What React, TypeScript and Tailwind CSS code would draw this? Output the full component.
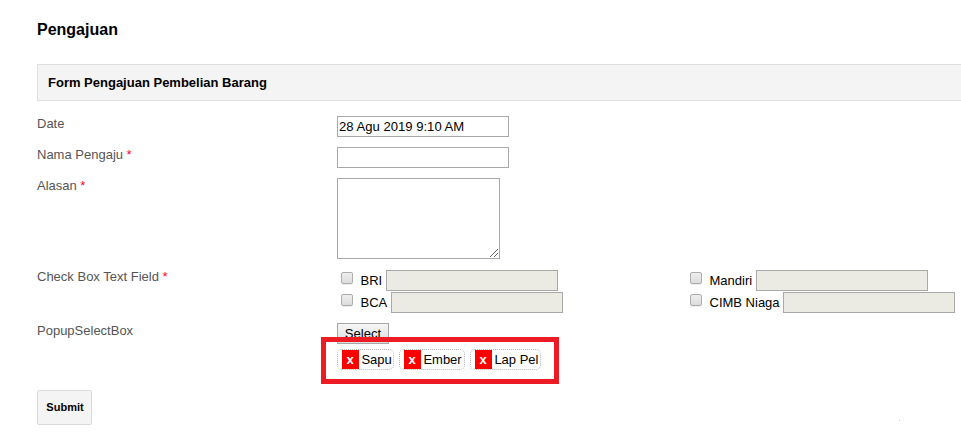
import React from "react";

type BankProps = { name: string; width: string };

function Required() {
  return <span className="text-[#ff0033]"> *</span>;
}

function Label({ text, required }: { text: string; required?: boolean }) {
  return (
    <label className="w-[300px] shrink-0 text-[#555555]">
      {text}
      {required && <Required />}
    </label>
  );
}

function BankOption({ name, width }: BankProps) {
  return (
    <div className="flex h-[22px] items-start">
      <button
        type="button"
        role="checkbox"
        aria-checked="false"
        aria-label={name}
        className="mt-[2px] h-3 w-3 shrink-0 rounded-[2px] border border-[#adadad] bg-linear-to-b from-[#eeeeee] to-[#dcdcdc] shadow-[0_1px_0_#eeeeee]"
      />
      <span className={`ml-[7.5px] shrink-0 pt-[3px] text-black ${width}`}>{name}</span>
      <input disabled className="h-[21px] w-[172px] shrink-0 border border-[#a9a9a9] bg-[#ebebe4]" />
    </div>
  );
}

function Chip({ name, width }: BankProps) {
  return (
    <div className={`flex h-[21px] rounded-[5px] border border-dotted border-[#b5b5b5] pl-1 text-black ${width}`}>
      <button type="button" className="h-[19px] w-[17px] shrink-0 bg-[#ff0000] pr-px text-center text-[13px] leading-[19px] font-bold text-white">
        x
      </button>
      <span className="ml-[2.4px] leading-[19px] whitespace-nowrap">{name}</span>
    </div>
  );
}

export default function App() {
  return (
    <main className="relative h-[433px] w-[961px] overflow-hidden bg-white pl-[37px] font-['Liberation_Sans',Arial,sans-serif] text-[13px] leading-[16px] whitespace-nowrap">
      <h1 className="h-16 pt-[21px] text-[16px] leading-[18px] font-bold text-black">Pengajuan</h1>
      <div className="h-[37px] border border-r-0 border-[#dfdfdf] bg-[#f4f4f4] pl-[10px] leading-[35px] font-bold text-black">
        Form Pengajuan Pembelian Barang
      </div>

      <div className="mt-[15px] flex h-[31px]">
        <Label text="Date" />
        <input readOnly value="28 Agu 2019 9:10 AM" className="h-[21px] w-[172px] border border-[#a9a9a9] pl-px text-[13.1px] text-black outline-none" />
      </div>
      <div className="flex h-[31px]">
        <Label text="Nama Pengaju" required />
        <input className="h-[21px] w-[172px] border border-[#a9a9a9] px-px outline-none" />
      </div>
      <div className="flex h-[91px]">
        <Label text="Alasan" required />
        <div className="relative h-[81px] w-[163px]">
          <textarea className="block h-full w-full resize-none border border-[#a9a9a9] outline-none" />
          <svg className="absolute right-[2px] bottom-[2px]" width="8" height="8" viewBox="0 0 8 8" shapeRendering="crispEdges">
            <path
              d="M0 7h1v1H0zM1 6h1v1H1zM2 5h1v1H2zM3 4h1v1H3zM4 3h1v1H4zM5 2h1v1H5zM6 1h1v1H6zM7 0h1v1H7zM4 7h1v1H4zM5 6h1v1H5zM6 5h1v1H6zM7 4h1v1H7z"
              fill="#666666"
            />
          </svg>
        </div>
      </div>
      <div className="flex h-[54px]">
        <Label text="Check Box Text Field" required />
        <div className="grid w-[624px] shrink-0 grid-cols-[349px_auto] content-start pt-px pl-1">
          <BankOption name="BRI" width="w-[25.5px]" />
          <BankOption name="Mandiri" width="w-[46.5px]" />
          <BankOption name="BCA" width="w-[30.5px]" />
          <BankOption name="CIMB Niaga" width="w-[73.5px]" />
        </div>
      </div>
      <div className="flex h-[67px]">
        <Label text="PopupSelectBox" />
        <div>
          <button type="button" className="block h-[21px] w-[52px] border border-[#a6a6a6] bg-linear-to-b from-[#f6f6f6] to-[#dddddd] text-[13.1px] leading-[19px] text-black">
            Select
          </button>
          <div className="mt-[5px] flex gap-[5px]">
            <Chip name="Sapu" width="w-[57px]" />
            <Chip name="Ember" width="w-[66px]" />
            <Chip name="Lap Pel" width="w-[71px]" />
          </div>
        </div>
      </div>
      <button type="button" className="block h-[35px] w-[55px] rounded-[2px] border border-[#dadada] bg-[#f4f4f4] pb-px pl-px text-[11px] font-bold text-black">
        Submit
      </button>
      <div className="pointer-events-none absolute top-[337px] left-[321px] h-[47px] w-[238px] border-5 border-[#ed1c24]" />
      <span className="absolute top-[420px] left-[899px] h-px w-px bg-[#cccccc]" />
    </main>
  );
}
